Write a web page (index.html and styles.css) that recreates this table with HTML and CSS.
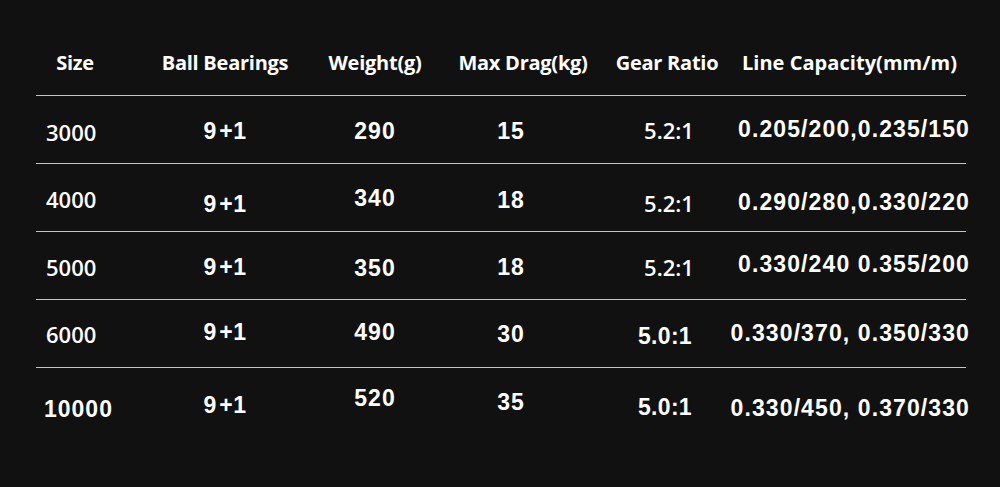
FILE: index.html
```html
<!DOCTYPE html>
<html lang="en">
<head>
<meta charset="utf-8">
<title>Reel Specifications</title>
<link rel="stylesheet" href="styles.css">
</head>
<body>
<div class="table">
  <div class="row head">
    <div class="h c1">Size</div>
    <div class="h">Ball Bearings</div>
    <div class="h">Weight(g)</div>
    <div class="h">Max Drag(kg)</div>
    <div class="h c5">Gear Ratio</div>
    <div class="h c6">Line Capacity(mm/m)</div>
  </div>
  <div class="row">
    <div class="d size os y1">3000</div>
    <div class="d">9<span class="gap">+1</span></div>
    <div class="d">290</div>
    <div class="d drag">15</div>
    <div class="d gear os y-1">5.2:1</div>
    <div class="d cap y-2">0.205/200,0.235/150</div>
  </div>
  <div class="row">
    <div class="d size os">4000</div>
    <div class="d y5">9<span class="gap">+1</span></div>
    <div class="d y-1">340</div>
    <div class="d drag y1">18</div>
    <div class="d gear os y4">5.2:1</div>
    <div class="d cap y3">0.290/280,0.330/220</div>
  </div>
  <div class="row">
    <div class="d size os">5000</div>
    <div class="d">9<span class="gap">+1</span></div>
    <div class="d y1">350</div>
    <div class="d drag">18</div>
    <div class="d gear os">5.2:1</div>
    <div class="d cap y-3">0.330/240 0.355/200</div>
  </div>
  <div class="row">
    <div class="d size os y-1">6000</div>
    <div class="d y-3">9<span class="gap">+1</span></div>
    <div class="d y-3">490</div>
    <div class="d drag y-1">30</div>
    <div class="d gear ar y1">5.0:1</div>
    <div class="d cap y-2">0.330/370, 0.350/330</div>
  </div>
  <div class="row">
    <div class="d size big y6">10000</div>
    <div class="d y2">9<span class="gap">+1</span></div>
    <div class="d y-5">520</div>
    <div class="d drag y-1">35</div>
    <div class="d gear ar y4">5.0:1</div>
    <div class="d cap y5">0.330/450, 0.370/330</div>
  </div>
</div>
</body>
</html>
```

FILE: styles.css
```css
html, body {
  margin: 0;
  padding: 0;
  background: #111111;
}

body {
  width: 1000px;
  height: 487px;
  overflow: hidden;
  color: #ffffff;
}

.table {
  width: 930px;
  margin-left: 36px;
}

.row {
  display: grid;
  grid-template-columns: 114px 150px 150px 146px 162px 208px;
  align-items: start;
  height: 67px;
  border-bottom: 1px solid #c4c4c4;
}

.row.head {
  height: 95px;
}

.row:last-child {
  border-bottom: none;
}

.h {
  display: flex;
  justify-content: center;
  font-family: "Open Sans", sans-serif;
  font-weight: 700;
  font-size: 20px;
  line-height: 24px;
  letter-spacing: -0.25px;
  padding-top: 51px;
  white-space: nowrap;
}

.c1 { padding-right: 36px; }
.c5 { padding-right: 20px; }
.c6 {
  padding-right: 25px;
  letter-spacing: 0.05px;
}

.d {
  font-family: "Liberation Sans", Arial, sans-serif;
  font-weight: 700;
  font-size: 23px;
  line-height: 26px;
  letter-spacing: 1px;
  padding-top: 22px;
  text-align: center;
  white-space: nowrap;
}

.gap {
  margin-left: 2px;
  letter-spacing: 0.5px;
}

.d.size {
  text-align: left;
  padding-left: 10px;
}

.d.os {
  font-family: "Open Sans", sans-serif;
  font-weight: 600;
  font-size: 22px;
  letter-spacing: 0;
}

.d.big {
  font-family: "Liberation Sans", Arial, sans-serif;
  font-size: 23px;
  letter-spacing: 1px;
  padding-left: 8px;
}

.d.drag {
  padding-right: 24px;
}

.d.gear {
  padding-right: 16px;
}

.d.gear.ar {
  letter-spacing: 0.3px;
  padding-right: 24px;
}

.d.cap {
  display: flex;
  justify-content: flex-end;
  letter-spacing: 1.1px;
  margin-right: -4px;
}

.y-5 { padding-top: 17px; }
.y-3 { padding-top: 19px; }
.y-2 { padding-top: 20px; }
.y-1 { padding-top: 21px; }
.y1 { padding-top: 23px; }
.y2 { padding-top: 24px; }
.y3 { padding-top: 25px; }
.y4 { padding-top: 26px; }
.y5 { padding-top: 27px; }
.y6 { padding-top: 28px; }
```
